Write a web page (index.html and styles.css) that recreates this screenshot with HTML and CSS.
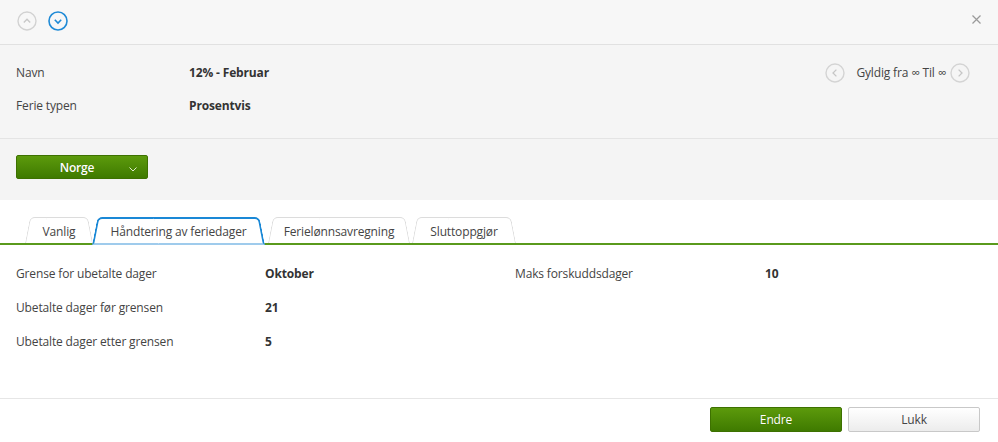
FILE: index.html
```html
<!DOCTYPE html>
<html lang="no">
<head>
    <meta charset="UTF-8">
    <title>Ferie</title>
    <link rel="stylesheet" href="styles.css">
</head>
<body>
<div class="dialog">
    <div class="topbar">
        <div class="nav-arrows">
            <span class="circle-btn">
                <svg width="20" height="20" viewBox="0 0 20 20"><circle cx="10" cy="10" r="9" fill="none" stroke="#d2d2d2" stroke-width="1.4"/><path d="M6.8 11.5 L10 8.3 L13.2 11.5" fill="none" stroke="#c8c8c8" stroke-width="1.4"/></svg>
            </span>
            <span class="circle-btn">
                <svg width="20" height="20" viewBox="0 0 20 20"><circle cx="10" cy="10" r="9" fill="none" stroke="#1f8ad6" stroke-width="1.6"/><path d="M6.8 8.8 L10 12 L13.2 8.8" fill="none" stroke="#1f8ad6" stroke-width="1.6"/></svg>
            </span>
        </div>
        <span class="close">
            <svg width="9" height="9" viewBox="0 0 9 9"><path d="M0.5 0.5 L8.5 8.5 M8.5 0.5 L0.5 8.5" stroke="#9a9a9a" stroke-width="1.2"/></svg>
        </span>
    </div>

    <div class="info">
        <div class="info-rows">
            <div class="info-row"><span class="label">Navn</span><span class="value">12% - Februar</span></div>
            <div class="info-row"><span class="label">Ferie typen</span><span class="value">Prosentvis</span></div>
        </div>
        <div class="period">
            <svg width="20" height="20" viewBox="0 0 20 20"><circle cx="10" cy="10" r="9" fill="none" stroke="#d4d4d4" stroke-width="1.4"/><path d="M11.4 6.6 L8 10 L11.4 13.4" fill="none" stroke="#c6c6c6" stroke-width="1.3"/></svg>
            <span class="period-text">Gyldig fra ∞ Til ∞</span>
            <svg width="20" height="20" viewBox="0 0 20 20"><circle cx="10" cy="10" r="9" fill="none" stroke="#d4d4d4" stroke-width="1.4"/><path d="M8.6 6.6 L12 10 L8.6 13.4" fill="none" stroke="#c6c6c6" stroke-width="1.3"/></svg>
        </div>
    </div>

    <div class="country">
        <button class="btn-green dropdown">
            <span>Norge</span>
            <svg class="caret" width="8" height="5" viewBox="0 0 8 5"><path d="M0.5 0.5 L4 4 L7.5 0.5" fill="none" stroke="#dfeccc" stroke-width="1"/></svg>
        </button>
    </div>

    <div class="tabs">
        <span class="tab w-vanlig">Vanlig</span>
        <span class="tab active w-handtering">Håndtering av feriedager</span>
        <span class="tab w-ferie">Ferielønnsavregning</span>
        <span class="tab w-slutt">Sluttoppgjør</span>
    </div>

    <div class="content">
        <div class="grid">
            <span class="label">Grense for ubetalte dager</span>
            <span class="value">Oktober</span>
            <span class="label">Maks forskuddsdager</span>
            <span class="value">10</span>

            <span class="label">Ubetalte dager før grensen</span>
            <span class="value">21</span>
            <span></span><span></span>

            <span class="label">Ubetalte dager etter grensen</span>
            <span class="value">5</span>
            <span></span><span></span>
        </div>
    </div>

    <div class="footer">
        <button class="btn-green">Endre</button>
        <button class="btn-white">Lukk</button>
    </div>
</div>
</body>
</html>
```

FILE: styles.css
```css
*{
    margin: 0;
    padding: 0;
    box-sizing: border-box;
}
body{
    font-family: "Open Sans", "Liberation Sans", sans-serif;
    font-size: 12px;
    letter-spacing: -0.15px;
    color: #444;
    background: #fff;
}
.dialog{
    width: 998px;
    height: 442px;
    display: flex;
    flex-direction: column;
}
.topbar{
    height: 45px;
    background: #f7f7f7;
    border-bottom: 1px solid #e1e1e1;
    display: flex;
    align-items: center;
    justify-content: space-between;
    padding: 0 17px 3px 17px;
}
.nav-arrows{
    display: flex;
    gap: 11px;
}
.circle-btn{
    display: flex;
}
.close{
    display: flex;
    margin-bottom: 2px;
}

.info{
    height: 94px;
    background: #f5f5f5;
    border-bottom: 1px solid #e4e4e4;
    display: flex;
    justify-content: space-between;
    padding: 11px 28px 0 16px;
}
.info-row{
    height: 33px;
    display: flex;
    align-items: center;
}
.info-row .label{
    width: 173px;
}
.value{
    font-weight: 700;
    color: #333;
}
.period{
    height: 33px;
    display: flex;
    align-items: center;
}
.period-text{
    margin: 0 4px 0 11px;
}

.country{
    height: 61px;
    background: #f4f4f4;
    padding: 16px 16px 0 16px;
}
button{
    font-family: inherit;
    font-size: 12px;
    letter-spacing: inherit;
    cursor: pointer;
}
.btn-green{
    height: 25px;
    width: 132px;
    border: 1px solid #3d7100;
    border-radius: 2px;
    background: linear-gradient(#5c9a0c, #3f7a00);
    color: #fff;
    text-shadow: 0 0 1px rgba(0,0,0,0.2);
}
.dropdown{
    height: 24px;
    position: relative;
    display: flex;
    align-items: center;
    justify-content: center;
    padding-right: 10px;
    font-weight: 600;
}
.dropdown .caret{
    position: absolute;
    right: 10px;
    top: 11px;
}

.tabs{
    height: 45px;
    display: flex;
    align-items: flex-end;
    padding-left: 25px;
    border-bottom: 2px solid #5a9a1c;
}
.tab{
    position: relative;
    z-index: 0;
    height: 26px;
    display: flex;
    align-items: center;
    justify-content: center;
    padding-top: 2px;
    color: #444;
}
.tab::before,
.tab::after{
    content: '';
    position: absolute;
    top: 0;
    bottom: 0;
    width: 60%;
    background: #fff;
    border: 1px solid #dcdcdc;
    border-bottom: none;
    z-index: -1;
}
.tab::before{
    left: 0;
    border-right: none;
    border-radius: 5px 0 0 0;
    transform-origin: bottom left;
    transform: skewX(-11deg);
}
.tab::after{
    right: 0;
    border-left: none;
    border-radius: 0 5px 0 0;
    transform-origin: bottom right;
    transform: skewX(11deg);
}
.tab.active{
    z-index: 1;
    height: 28px;
    margin-bottom: -2px;
    padding-bottom: 2px;
}
.tab.active::before,
.tab.active::after{
    border: 2px solid #1a88d6;
    border-bottom: 2px solid #9fcbec;
}
.tab.active::before{
    border-right: none;
}
.tab.active::after{
    border-left: none;
}
.w-vanlig{ width: 68px; }
.w-handtering{ width: 173px; margin-left: -1px; }
.w-ferie{ width: 142px; margin-left: 3px; }
.w-slutt{ width: 104px; margin-left: 2px; }

.content{
    height: 154px;
    border-bottom: 1px solid #e6e6e6;
    padding: 11px 0 0 16px;
}
.grid{
    display: grid;
    grid-template-columns: 249px 250px 250px 200px;
    grid-auto-rows: 34px;
    align-items: center;
}

.footer{
    flex: 1;
    display: flex;
    justify-content: flex-end;
    gap: 6px;
    padding: 8px 18px 0 0;
}
.btn-white{
    height: 25px;
    width: 132px;
    border: 1px solid #c8c8c8;
    border-radius: 2px;
    background: linear-gradient(#fff, #ececec);
    color: #444;
}
```
